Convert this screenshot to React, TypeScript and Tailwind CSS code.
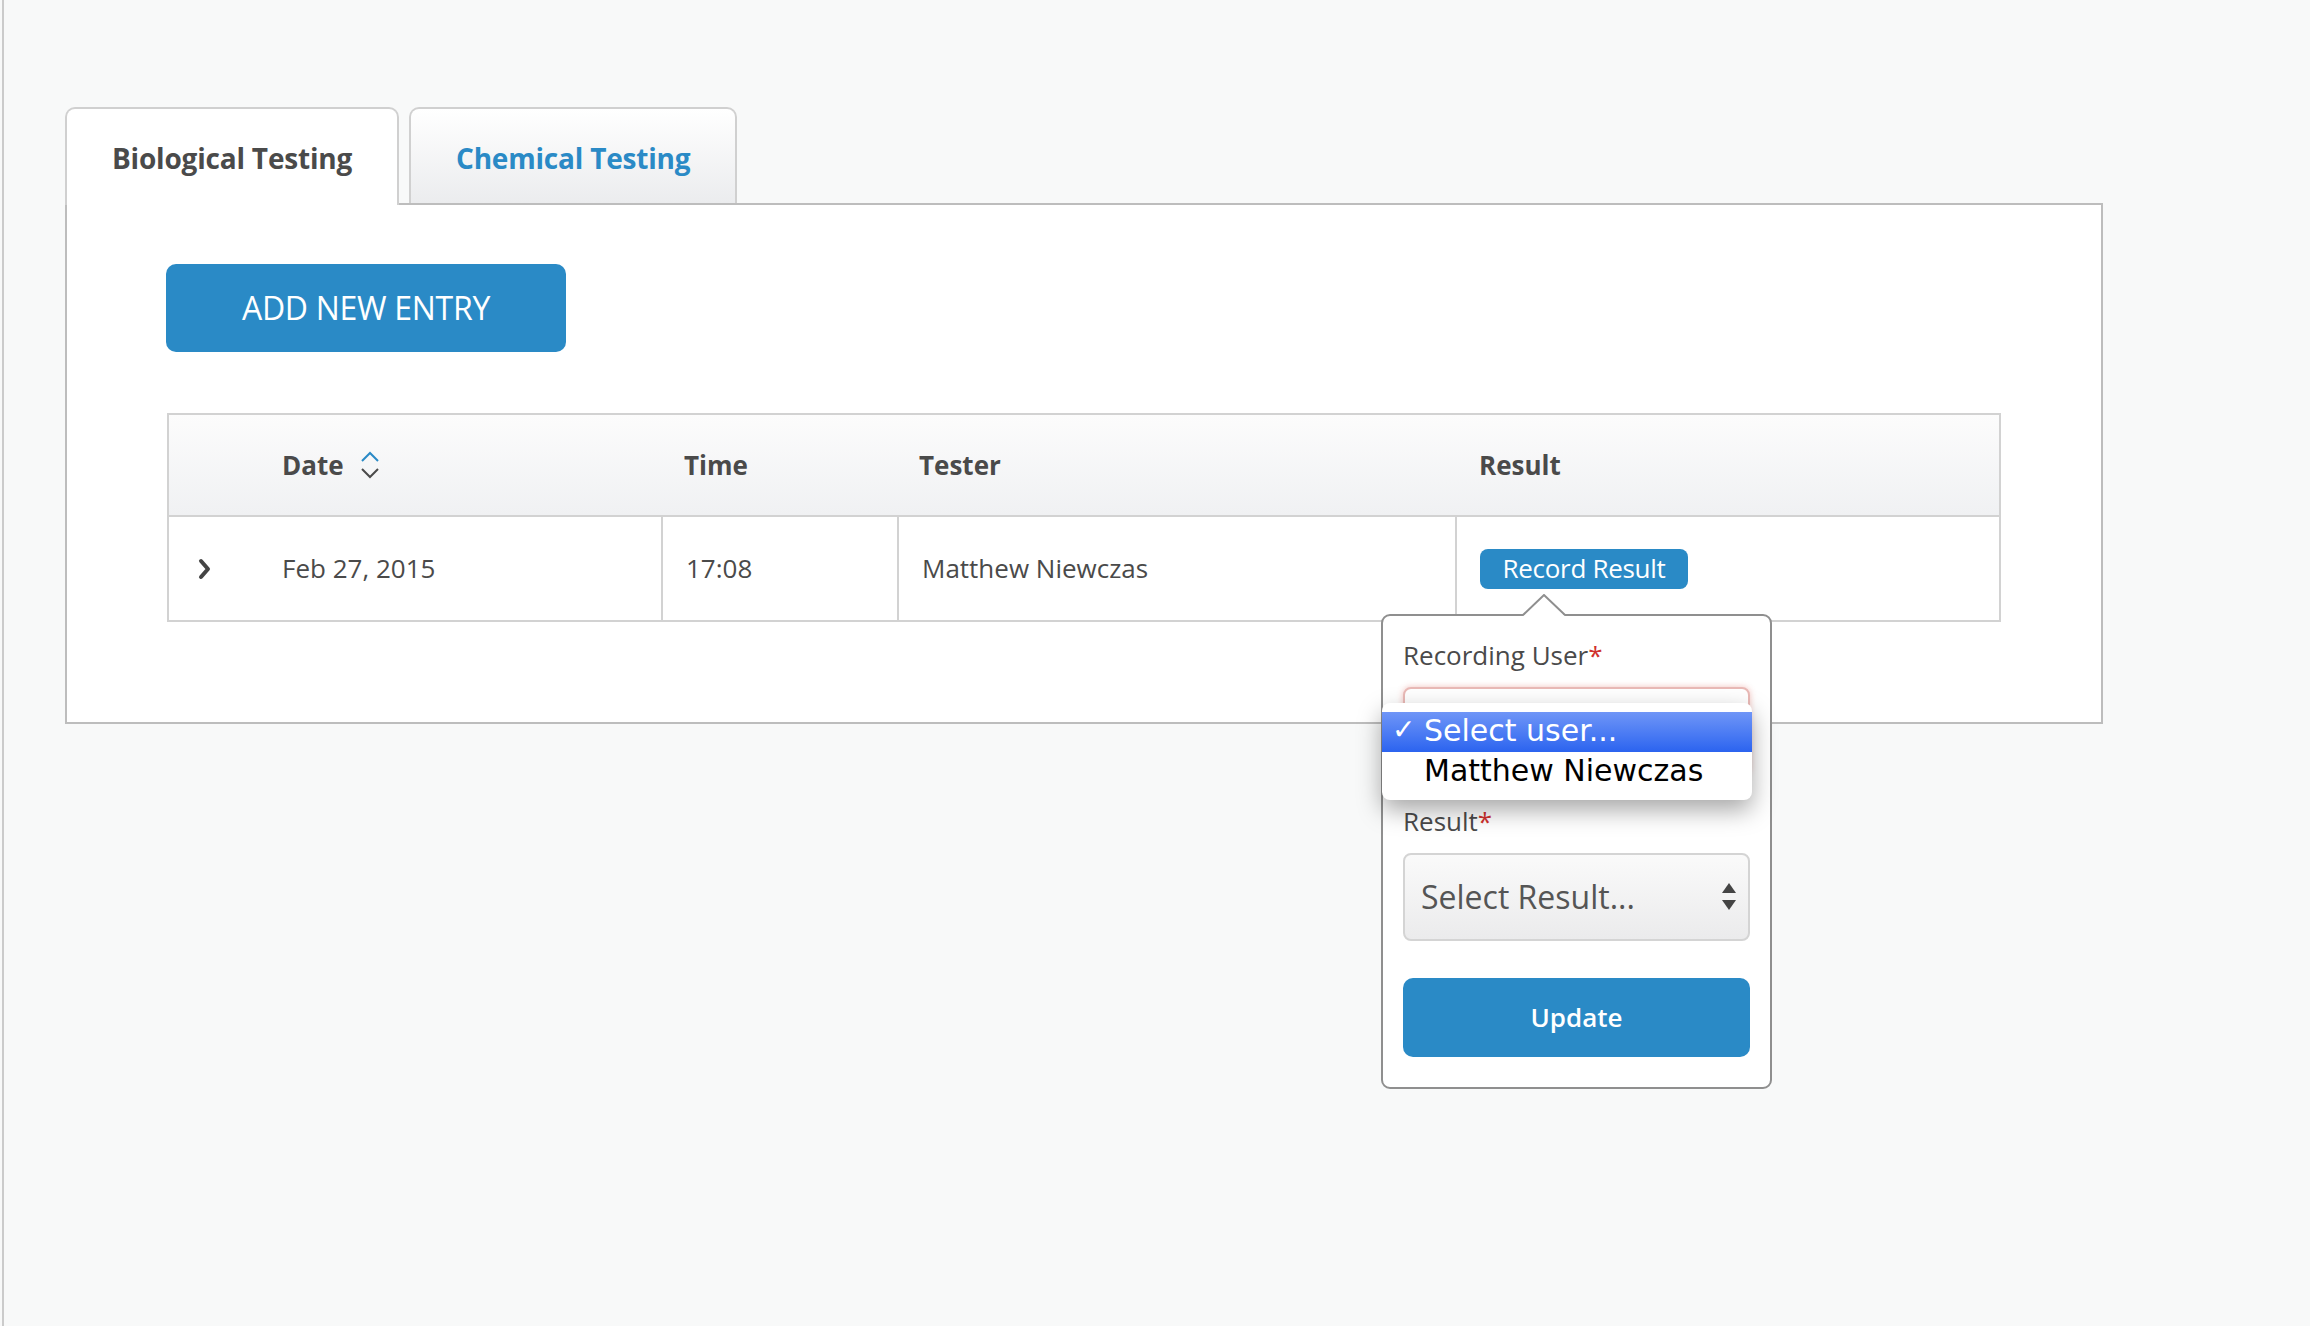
const SortIcon = () => (
  <svg width="20" height="28" viewBox="0 0 20 28" className="ml-[16px]">
    <polyline points="2,10 10,2 18,10" fill="none" stroke="#2a8ac6" strokeWidth="2" />
    <polyline points="2,18 10,26 18,18" fill="none" stroke="#4a4a4a" strokeWidth="2" />
  </svg>
);

const RowChevron = () => (
  <svg width="14" height="22" viewBox="0 0 14 22">
    <path d="M3 3 L10 11 L3 19" fill="none" stroke="#444" strokeWidth="4" strokeLinecap="round" strokeLinejoin="round" />
  </svg>
);

const SelectArrows = () => (
  <svg width="14" height="28" viewBox="0 0 14 28">
    <polygon points="7,0 14,10 0,10" fill="#444" />
    <polygon points="0,17 14,17 7,27" fill="#444" />
  </svg>
);

const App = () => {
  return (
    <div className="relative min-h-screen bg-[#f8f9f9] font-['Open_Sans',sans-serif] text-[#4a4a4a]">
      <div className="ml-[2px] min-h-screen border-l-2 border-[#cbcbcb] pt-[107px] pl-[61px]">
        {/* tabs */}
        <div className="flex items-start gap-[10px]">
          <div className="relative z-10 -mb-[2px] flex h-[98px] w-[334px] items-center rounded-t-[10px] border-x-2 border-t-2 border-[#d0d0d0] bg-white pt-[2px] pl-[45px] text-[28px] font-bold tracking-[-0.2px]">
            Biological Testing
          </div>
          <div className="flex h-[96px] w-[328px] items-center rounded-t-[10px] border-x-2 border-t-2 border-[#d0d0d0] bg-gradient-to-b from-white to-[#ebecee] pt-[4px] pl-[45px] text-[28px] font-bold tracking-[-0.2px] text-[#2a8ac6]">
            Chemical Testing
          </div>
        </div>

        {/* panel */}
        <div className="w-[2038px] border-2 border-[#bdbdbd] bg-white pt-[59px] pr-[100px] pb-[100px] pl-[99px]">
          <button className="flex h-[88px] w-[400px] items-center justify-center rounded-[10px] bg-[#2a8ac6] text-[32px] tracking-[-0.3px] text-white">
            ADD NEW ENTRY
          </button>

          <div className="mt-[61px] ml-[1px] w-[1834px] border-2 border-[#d2d2d2]">
            <div className="grid h-[102px] grid-cols-[492px_236px_558px_1fr] border-b-2 border-[#d2d2d2] bg-gradient-to-b from-[#fcfcfc] to-[#f0f1f3] text-[26px] font-bold">
              <div className="flex items-center pl-[113px]">
                Date
                <SortIcon />
              </div>
              <div className="flex items-center border-l-2 border-transparent pl-[21px]">Time</div>
              <div className="flex items-center border-l-2 border-transparent pl-[20px]">Tester</div>
              <div className="flex items-center border-l-2 border-transparent pl-[22px]">Result</div>
            </div>
            <div className="grid h-[103px] grid-cols-[492px_236px_558px_1fr] text-[26px]">
              <div className="flex items-center pl-[29px]">
                <RowChevron />
                <span className="ml-[70px]">Feb 27, 2015</span>
              </div>
              <div className="flex items-center border-l-2 border-[#d2d2d2] pl-[23px]">17:08</div>
              <div className="flex items-center border-l-2 border-[#d2d2d2] pl-[23px]">Matthew Niewczas</div>
              <div className="flex items-center border-l-2 border-[#d2d2d2] pl-[23px]">
                <button className="flex h-[40px] w-[208px] items-center justify-center rounded-[8px] bg-[#2a8ac6] text-[26px] tracking-[-0.3px] text-white">
                  Record Result
                </button>
              </div>
            </div>
          </div>
        </div>
      </div>

      {/* popover */}
      <div className="absolute top-[614px] left-[1381px] w-[391px] rounded-[9px] border-2 border-[#8f8f8f] bg-white px-[20px] pt-[22px] pb-[30px] text-[26px]">
        <div className="leading-[35px]">
          Recording User<span className="text-[#d0312d]">*</span>
        </div>
        <div className="mt-[14px] h-[88px] rounded-[8px] border-2 border-[#e9b9b6] bg-white shadow-[0_0_6px_rgba(220,80,70,0.35)]"></div>
        <div className="mt-[29px] leading-[35px]">
          Result<span className="text-[#d0312d]">*</span>
        </div>
        <div className="mt-[14px] flex h-[88px] items-center justify-between rounded-[8px] border-2 border-[#d4d4d4] bg-gradient-to-b from-[#fafafa] to-[#ebebec] pr-[12px] pl-[16px] text-[32px] text-[#555]">
          <span>Select Result...</span>
          <SelectArrows />
        </div>
        <button className="mt-[37px] flex h-[79px] w-full items-center justify-center rounded-[10px] bg-[#2a8ac6] text-[26px] font-semibold text-white">
          Update
        </button>

        {/* native select list */}
        <div className="absolute top-[87px] left-[-1px] w-[370px] rounded-[8px] bg-white pt-[9px] pb-[8px] font-['DejaVu_Sans',sans-serif] text-[30px] text-black shadow-[0_10px_24px_rgba(0,0,0,0.35)]">
          <div className="flex h-[40px] items-center bg-gradient-to-b from-[#6f95f7] to-[#2b63ef] pb-[4px] text-white">
            <span className="w-[42px] pl-[10px] text-[28px] font-bold">✓</span>
            <span>Select user...</span>
          </div>
          <div className="flex h-[40px] items-center pb-[4px] pl-[42px]">Matthew Niewczas</div>
        </div>
      </div>

      {/* popover arrow */}
      <svg width="44" height="24" viewBox="0 0 44 24" className="absolute top-[594px] left-[1522px]">
        <polygon points="0,24 2,21 22,1 42,21 44,24" fill="white" />
        <polyline points="1,21 22,1 43,21" fill="none" stroke="#8f8f8f" strokeWidth="2" />
      </svg>
    </div>
  );
};

export default App;
